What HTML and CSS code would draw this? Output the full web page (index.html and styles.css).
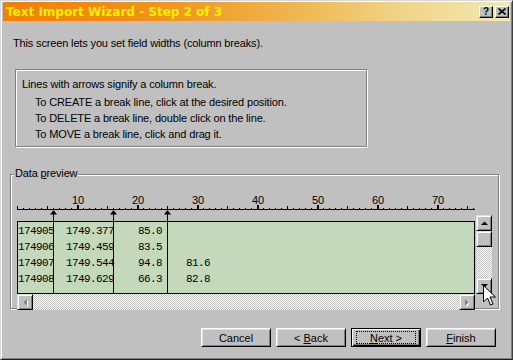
FILE: index.html
```html
<!DOCTYPE html>
<html>
<head>
<meta charset="utf-8">
<title>Text Import Wizard</title>
<link rel="stylesheet" href="styles.css">
</head>
<body>
<div class="window">
  <div class="titlebar">
    <span class="title">Text Import Wizard - Step 2 of 3</span>
    <div class="tbtns">
      <span class="tbtn help">?</span>
      <span class="tbtn close"><svg width="8" height="7" viewBox="0 0 8 7"><path d="M0.5 0.5L7.5 6.5M7.5 0.5L0.5 6.5" stroke="#000" stroke-width="1.6"/></svg></span>
    </div>
  </div>
  <div class="content">
    <p class="intro">This screen lets you set field widths (column breaks).</p>
    <div class="info">
      <p class="lead">Lines with arrows signify a column break.</p>
      <p class="sub">To CREATE a break line, click at the desired position.</p>
      <p class="sub">To DELETE a break line, double click on the line.</p>
      <p class="sub">To MOVE a break line, click and drag it.</p>
    </div>
    <div class="group">
      <span class="legend">Data <u>p</u>review</span>
      <div class="preview">
        <div class="left">
          <svg class="ruler" width="458" height="31" viewBox="0 0 458 31" shape-rendering="crispEdges">
            <rect x="0" y="19" width="458" height="1" fill="#000"/>
            <g fill="#000" id="ticks"></g>
            <g class="labels" font-family="Liberation Sans, Arial, sans-serif" font-size="11" text-anchor="middle" fill="#000">
              <text x="61" y="14">10</text>
              <text x="121" y="14">20</text>
              <text x="181" y="14">30</text>
              <text x="241" y="14">40</text>
              <text x="301" y="14">50</text>
              <text x="361" y="14">60</text>
              <text x="421" y="14">70</text>
            </g>
            <g fill="#000" shape-rendering="auto">
              <path d="M33 24.5L36.5 20L40 24.5Z"/>
              <path d="M93 24.5L96.5 20L100 24.5Z"/>
              <path d="M147 24.5L150.5 20L154 24.5Z"/>
            </g>
            <rect x="36" y="22" width="1" height="9" fill="#000"/>
            <rect x="96" y="22" width="1" height="9" fill="#000"/>
            <rect x="150" y="22" width="1" height="9" fill="#000"/>
          </svg>
          <div class="data">
<pre>174905  1749.377    85.0
174906  1749.459    83.5
174907  1749.544    94.8    81.6
174908  1749.629    66.3    82.8</pre>
            <i class="brk" style="left:35px"></i>
            <i class="brk" style="left:95px"></i>
            <i class="brk" style="left:149px"></i>
          </div>
          <div class="hscroll">
            <div class="sbtn"><svg width="6" height="9" viewBox="0 0 6 9"><path d="M5 1V8L1.5 4.5Z" fill="#fff" transform="translate(1 1)"/><path d="M5 1V8L1.5 4.5Z" fill="#808080"/></svg></div>
            <div class="track"></div>
            <div class="sbtn"><svg width="6" height="9" viewBox="0 0 6 9"><path d="M1 1V8L4.5 4.5Z" fill="#fff" transform="translate(1 1)"/><path d="M1 1V8L4.5 4.5Z" fill="#808080"/></svg></div>
          </div>
        </div>
        <div class="vscroll">
          <div class="sbtn"><svg width="7" height="4" viewBox="0 0 7 4"><path d="M0 4H7L3.5 0.5Z" fill="#000"/></svg></div>
          <div class="sbtn thumb"></div>
          <div class="track"></div>
          <div class="sbtn"><svg width="7" height="4" viewBox="0 0 7 4"><path d="M0 0H7L3.5 3.5Z" fill="#000"/></svg></div>
        </div>
      </div>
    </div>
    <div class="buttons">
      <button class="btn">Cancel</button>
      <button class="btn">&lt; <u>B</u>ack</button>
      <button class="btn default"><u>N</u>ext &gt;</button>
      <button class="btn"><u>F</u>inish</button>
    </div>
  </div>
  <svg class="cursor" width="14" height="22" viewBox="0 0 14 22"><path d="M0.5 0.5V17L4.5 13L7.5 20L10 19L7 12H12.5Z" fill="#fff" stroke="#000" stroke-width="1" stroke-linejoin="miter"/></svg>
</div>
<script>
(function(){
  var g=document.getElementById('ticks');var s='';
  for(var c=0;c<=76;c++){
    var x=6*c;
    if(c%10===0&&c>0){s+='<rect x="'+x+'" y="15" width="2" height="4"/>';}
    else if(c%5===0){s+='<rect x="'+x+'" y="16" width="1" height="3"/>';}
    else{s+='<rect x="'+x+'" y="18" width="1" height="1"/>';}
  }
  g.innerHTML=s;
})();
</script>
</body>
</html>
```
FILE: styles.css
```css
* { box-sizing: border-box; }
html, body { margin: 0; padding: 0; }
body {
  background: #c0c0c0;
  font-family: "Liberation Sans", Arial, sans-serif;
  font-size: 11px;
  color: #000;
}
p { margin: 0; }

.window {
  position: relative;
  width: 513px;
  height: 360px;
  border: 1px solid;
  border-color: #d8d8d8 #404040 #202020 #d8d8d8;
  box-shadow: inset 1px 1px #fff, inset -1px -1px #808080;
  padding: 1px 2px 2px 2px;
  display: flex;
  flex-direction: column;
  overflow: hidden;
}

.titlebar {
  height: 19px;
  flex: none;
  display: flex;
  align-items: center;
  justify-content: space-between;
  padding: 0 1px 0 3px;
  background: linear-gradient(to right, #f08004 0%, #f0921a 30%, #f0b24a 55%, #f0d68a 80%, #f0eab4 100%);
}
.title {
  font-family: "DejaVu Sans", sans-serif;
  font-weight: bold;
  font-size: 12px;
  color: #fff000;
  white-space: nowrap;
}
.tbtns { display: flex; gap: 2px; }
.tbtn {
  width: 14px;
  height: 12px;
  display: flex;
  align-items: center;
  justify-content: center;
  background: #c0c0c0;
  border: 1px solid;
  border-color: #fff #000 #000 #fff;
  box-shadow: inset -1px -1px #808080;
  font-weight: bold;
  font-size: 10px;
  line-height: 1;
}

.content { flex: 1; display: flex; flex-direction: column; letter-spacing: -0.15px; }

.intro { margin: 16px 0 0 10px; line-height: 13px; }

.info {
  margin: 19px 0 0 12px;
  width: 352px;
  height: 78px;
  border: 1px solid #808080;
  box-shadow: inset 1px 1px #fff, 1px 1px #fff;
  padding: 6px 0 0 6px;
  line-height: 16px;
}
.info .lead { margin-bottom: 2px; }
.info .sub { padding-left: 13px; }

.group {
  position: relative;
  margin: 27px 0 0 7px;
  width: 489px;
  height: 135px;
  border: 1px solid #808080;
  box-shadow: inset 1px 1px #fff, 1px 1px #fff;
  padding: 15px 0 0 6px;
}
.legend {
  position: absolute;
  left: 3px;
  top: -8px;
  line-height: 13px;
  padding: 0 1px;
  background: #c0c0c0;
}

.preview { display: flex; gap: 1px; align-items: flex-start; letter-spacing: 0; }
.left { width: 458px; display: flex; flex-direction: column; }
.ruler { display: block; }

.data {
  position: relative;
  height: 73px;
  border: 1px solid #000;
  background: #c4d9bc;
  padding-top: 1px;
}
.data pre {
  margin: 0;
  font-family: "Liberation Mono", monospace;
  font-size: 11px;
  letter-spacing: -0.6px;
  line-height: 16px;
}
.brk {
  position: absolute;
  top: 0;
  bottom: 0;
  width: 1px;
  background: #000;
}

.sbtn {
  width: 16px;
  height: 16px;
  flex: none;
  display: flex;
  align-items: center;
  justify-content: center;
  background: #c0c0c0;
  border: 1px solid;
  border-color: #dfdfdf #000 #000 #dfdfdf;
  box-shadow: inset 1px 1px #fff, inset -1px -1px #808080;
}
.sbtn svg { display: block; }
.track {
  flex: 1;
  background: repeating-conic-gradient(#c0c0c0 0 25%, #fff 0 50%) 0 0 / 2px 2px;
}
.hscroll { display: flex; height: 16px; }
.vscroll {
  margin-top: 25px;
  width: 16px;
  height: 79px;
  display: flex;
  flex-direction: column;
}

.buttons {
  margin-top: 19px;
  display: flex;
  justify-content: flex-end;
  gap: 5px;
  padding-right: 14px;
  letter-spacing: 0;
}
.btn {
  position: relative;
  width: 70px;
  height: 19px;
  padding: 0;
  background: #c0c0c0;
  font-family: "Liberation Sans", Arial, sans-serif;
  font-size: 11px;
  color: #000;
  border: 1px solid;
  border-color: #fff #000 #000 #fff;
  box-shadow: inset 1px 1px #dfdfdf, inset -1px -1px #808080;
}
.btn.default {
  border-color: #000;
  box-shadow: inset 1px 1px #fff, inset -1px -1px #000, inset -2px -2px #808080;
}
.btn.default::after {
  content: "";
  position: absolute;
  left: 4px; right: 4px; top: 2px; bottom: 2px;
  border: 1px dotted #000;
}

.cursor {
  position: absolute;
  left: 482px;
  top: 284px;
}
```
